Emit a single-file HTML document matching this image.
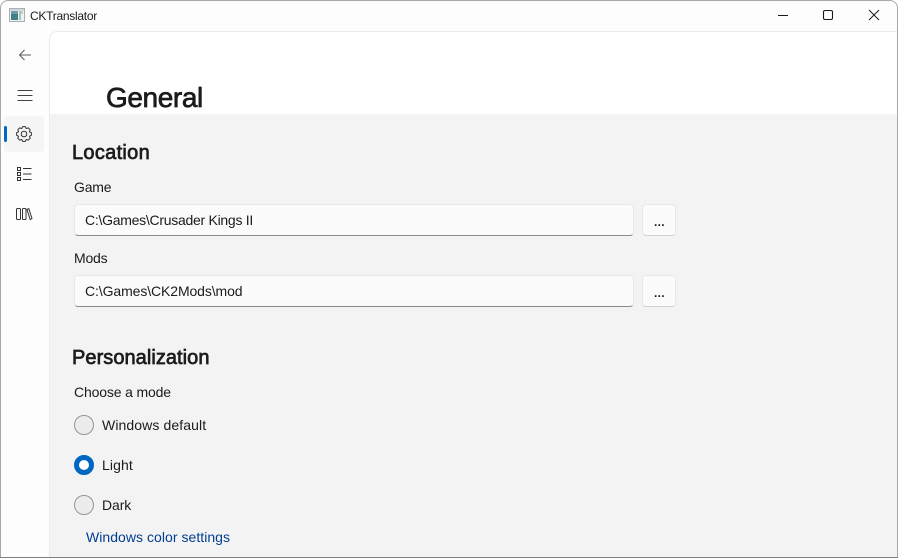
<!DOCTYPE html>
<html>
<head>
<meta charset="utf-8">
<style>
html,body{margin:0;padding:0;width:898px;height:558px;overflow:hidden;background:#fff}
*{box-sizing:border-box}
body{font-family:"Liberation Sans",sans-serif;color:#1b1b1b;position:relative}
.abs{position:absolute}
.t{position:absolute;white-space:nowrap;line-height:20px;font-size:14px}
.h{-webkit-text-stroke:0.7px currentColor}
#win{position:absolute;left:0;top:0;width:898px;height:558px;background:#fdfdfd;border:1px solid #a8a8a8;border-bottom-color:#7f7f7f;border-radius:8px 8px 0 0;overflow:hidden}
.box{position:absolute;background:#fbfbfb;border:1px solid #e8e8e8;border-bottom:1px solid #8a8a8a;border-radius:4px}
.btn{position:absolute;background:#fbfbfb;border:1px solid #e8e8e8;border-bottom-color:#d0d0d0;border-radius:4px}
.radio{position:absolute;width:20px;height:20px;border-radius:50%;background:#ececec;border:1px solid #959595}
</style>
</head>
<body>
<div id="win"></div>
<div class="abs" style="left:49px;top:31px;width:848px;height:83px;background:#fff;border-left:1px solid #ebebeb;border-top:1px solid #ebebeb;border-top-left-radius:8px"></div>
<div class="abs" style="left:49px;top:114px;width:848px;height:443px;background:#f3f3f3;border-left:1px solid #ebebeb"></div>

<svg class="abs" style="left:9px;top:8px" width="16" height="14" viewBox="0 0 16 14">
<rect x="0.5" y="0.5" width="15" height="13" fill="#eef0f2" stroke="#a9aeb3"/>
<rect x="1" y="1" width="14" height="2" fill="#d4d8dc"/>
<rect x="2" y="3" width="7" height="9" fill="#3f7f86"/>
<rect x="2" y="3" width="7" height="3" fill="#6d9aa8"/>
<rect x="10" y="3" width="2" height="9" fill="#a8c6b8"/>
<rect x="12" y="3" width="2" height="3" fill="#c3ccd3"/>
</svg>
<div class="t" style="left:30px;top:6px;font-size:12px;letter-spacing:-0.27px">CKTranslator</div>

<svg class="abs" style="left:760px;top:0" width="138" height="32" viewBox="0 0 138 32" fill="none" stroke="#1a1a1a" stroke-width="1">
<path d="M18 15.5H28"/>
<rect x="63.5" y="10.5" width="9" height="9" rx="1.5" stroke-width="1.1"/>
<path d="M109 10L119 20M119 10L109 20"/>
</svg>

<!-- nav -->
<svg class="abs" style="left:17px;top:47px" width="16" height="16" viewBox="0 0 16 16" fill="none" stroke="#5a5a5a" stroke-width="1">
<path d="M2.5 8H14M7.5 3L2.5 8L7.5 13"/>
</svg>
<svg class="abs" style="left:17px;top:87px" width="16" height="16" viewBox="0 0 16 16" fill="none" stroke="#444" stroke-width="1">
<path d="M0.5 3.5H15.5M0.5 8.5H15.5M0.5 13.5H15.5"/>
</svg>
<div class="abs" style="left:4px;top:116px;width:40px;height:36px;background:#f5f5f5;border-radius:4px"></div>
<div class="abs" style="left:4px;top:126px;width:3px;height:16px;background:#0067c0;border-radius:2px"></div>
<svg class="abs" style="left:16px;top:126px" width="16" height="16" viewBox="0 0 16 16" fill="none" stroke="#333" stroke-width="1" stroke-linejoin="round">
<circle cx="8" cy="8" r="2.8"/>
<path d="M6.7 .6H9.3L10.26 2.55 12.3 1.86 14.14 3.7 13.45 5.74 15.39 6.7V9.3L13.45 10.26 14.14 12.3 12.3 14.14 10.26 13.45 9.3 15.39H6.7L5.74 13.45 3.7 14.14 1.86 12.3 2.55 10.26 .61 9.3V6.7L2.55 5.74 1.86 3.7 3.7 1.86 5.74 2.55Z"/>
</svg>
<svg class="abs" style="left:17px;top:167px" width="15" height="15" viewBox="0 0 15 15" fill="none" stroke="#333" stroke-width="1">
<rect x="0.5" y="0.5" width="3" height="3"/><rect x="0.5" y="5.5" width="3" height="3"/><rect x="0.5" y="10.5" width="3" height="3"/>
<path d="M6 1.5H14.5M6 7H14.5M6 12.5H14.5"/>
</svg>
<svg class="abs" style="left:16px;top:207px" width="17" height="15" viewBox="0 0 17 15" fill="none" stroke="#333" stroke-width="1">
<rect x="0.5" y="1.5" width="4" height="11" rx="1"/><rect x="6.5" y="1.5" width="3.5" height="11" rx="1"/>
<path d="M11 2.5L12.8 1.6L16 11.5L14.2 12.6z" stroke-linejoin="round"/>
</svg>

<div class="t h" style="left:106px;top:80px;font-size:28px;line-height:36px;letter-spacing:-0.4px">General</div>

<div class="t h" style="left:72px;top:141px;font-size:20px;line-height:24px;letter-spacing:0.3px;color:#1c1c1c">Location</div>
<div class="t" style="left:74px;top:177px;letter-spacing:-0.2px">Game</div>
<div class="box" style="left:74px;top:204px;width:560px;height:32px"></div>
<div class="t" style="left:85px;top:210px;letter-spacing:-0.27px">C:\Games\Crusader Kings II</div>
<div class="btn" style="left:642px;top:204px;width:34px;height:32px"></div>
<div class="t" style="left:654px;top:212px;font-size:12px;letter-spacing:0.3px;font-weight:bold">...</div>

<div class="t" style="left:74px;top:248px;letter-spacing:-0.2px">Mods</div>
<div class="box" style="left:74px;top:275px;width:560px;height:32px"></div>
<div class="t" style="left:85px;top:281px;letter-spacing:-0.1px">C:\Games\CK2Mods\mod</div>
<div class="btn" style="left:642px;top:275px;width:34px;height:32px"></div>
<div class="t" style="left:654px;top:283px;font-size:12px;letter-spacing:0.3px;font-weight:bold">...</div>

<div class="t h" style="left:72px;top:346px;font-size:20px;line-height:24px;letter-spacing:0.05px;color:#1c1c1c">Personalization</div>
<div class="t" style="left:74px;top:382px;letter-spacing:-0.15px">Choose a mode</div>

<div class="radio" style="left:74px;top:415px"></div>
<div class="t" style="left:102px;top:415px;letter-spacing:0.1px">Windows default</div>
<div class="radio" style="left:74px;top:455px;background:#fff;border:5px solid #0067c0"></div>
<div class="t" style="left:102px;top:455px;letter-spacing:0.1px">Light</div>
<div class="radio" style="left:74px;top:495px"></div>
<div class="t" style="left:102px;top:495px;letter-spacing:-0.1px">Dark</div>
<div class="t" style="left:86px;top:527px;color:#003e92;letter-spacing:0.04px">Windows color settings</div>
<div class="abs" style="left:0;top:557px;width:898px;height:1px;background:#7f7f7f"></div>
</body>
</html>
